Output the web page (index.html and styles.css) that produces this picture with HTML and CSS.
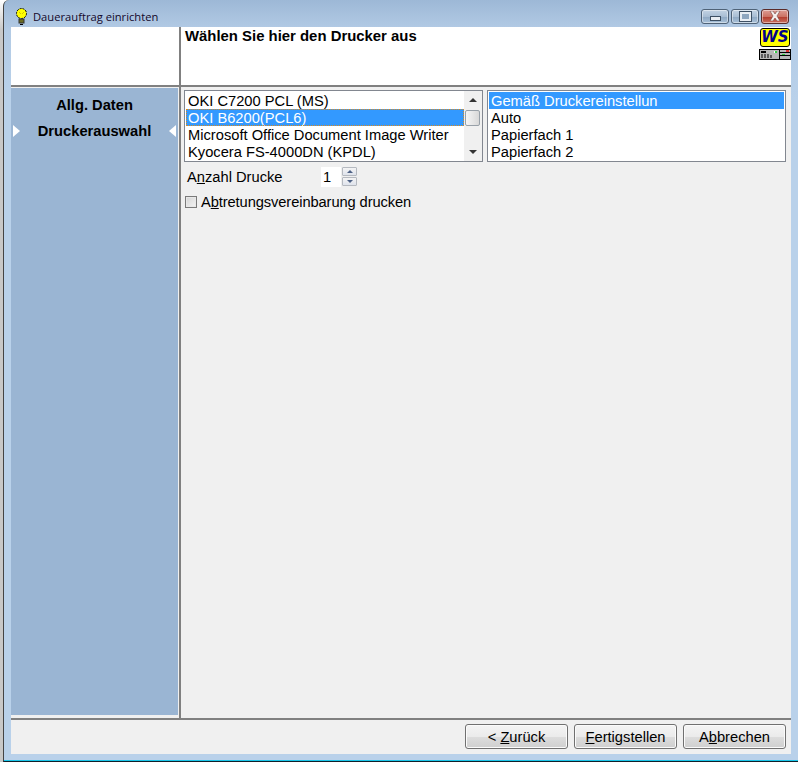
FILE: index.html
```html
<!DOCTYPE html>
<html lang="de">
<head>
    <meta charset="UTF-8">
    <title>Dauerauftrag einrichten</title>
    <link rel="stylesheet" href="styles.css">
</head>
<body>
    <div class="window">
        <!-- Title bar -->
        <div class="titlebar">
            <svg class="title-icon" width="13" height="17" viewBox="0 0 13 17">
                <circle cx="6.5" cy="5.5" r="5" fill="#ffff00" stroke="#000" stroke-width="1" stroke-dasharray="2 1"/>
                <path d="M4 4l2 2M9 4L7 6" stroke="#d8c800" fill="none"/>
                <rect x="4" y="11" width="5" height="4" fill="#6b6b20" stroke="#333" stroke-width="1"/>
                <rect x="5" y="16" width="3" height="1" fill="#000"/>
            </svg>
            <span class="title-text">Dauerauftrag einrichten</span>
            <div class="caption-buttons">
                <div class="caption-btn"><span class="glyph-min"></span></div>
                <div class="caption-btn"><span class="glyph-max"></span></div>
                <div class="caption-btn close">
                    <svg width="14" height="10" viewBox="0 0 14 10">
                        <path d="M2 0h3l2 3 2-3h3L9 5l3 5H9L7 7l-2 3H2l3-5z" fill="#f4f0ee" stroke="#7a4a44" stroke-width="0.6"/>
                    </svg>
                </div>
            </div>
        </div>

        <div class="content">
            <!-- Header -->
            <div class="header">
                <div class="header-left"></div>
                <div class="header-right">
                    <strong class="header-title">Wählen Sie hier den Drucker aus</strong>
                    <div class="logo">
                        <div class="logo-ws">WS</div>
                        <svg class="logo-printer" width="32" height="11" viewBox="0 0 32 11">
                            <rect x="0.5" y="0.5" width="31" height="10" fill="#b8b8b8" stroke="#000"/>
                            <rect x="2" y="2" width="5" height="2" fill="#000"/>
                            <path d="M3 5v4M6 5v4M9 5v4M12 6v3" stroke="#000"/>
                            <rect x="15" y="2" width="2" height="2" fill="#fff"/>
                            <rect x="16" y="2" width="2" height="2" fill="#30d040"/>
                            <rect x="20" y="1" width="1" height="9" fill="#000"/>
                            <path d="M21 3.5h10M21 6.5h10" stroke="#000"/>
                            <rect x="27" y="1" width="3" height="2" fill="#e03030"/>
                            <rect x="23" y="5" width="3" height="1" fill="#30d040"/>
                        </svg>
                    </div>
                </div>
            </div>

            <div class="main">
                <!-- Steps -->
                <div class="sidebar-wrap">
                    <nav class="sidebar">
                        <div class="step"><span class="step-label">Allg. Daten</span></div>
                        <div class="step active">
                            <span class="arrow-right"></span>
                            <span class="step-label">Druckerauswahl</span>
                            <span class="arrow-left"></span>
                        </div>
                    </nav>
                </div>

                <!-- Printer selection -->
                <div class="panel">
                    <div class="lists">
                        <div class="listbox printers">
                            <div class="list-items">
                                <div class="list-item">OKI C7200 PCL (MS)</div>
                                <div class="list-item selected focused">OKI B6200(PCL6)</div>
                                <div class="list-item">Microsoft Office Document Image Writer</div>
                                <div class="list-item">Kyocera FS-4000DN (KPDL)</div>
                            </div>
                            <div class="scrollbar">
                                <span class="scroll-up"></span>
                                <span class="scroll-thumb"></span>
                                <span class="scroll-down"></span>
                            </div>
                        </div>
                        <div class="listbox trays">
                            <div class="list-items">
                                <div class="list-item selected">Gemäß Druckereinstellun</div>
                                <div class="list-item">Auto</div>
                                <div class="list-item">Papierfach 1</div>
                                <div class="list-item">Papierfach 2</div>
                            </div>
                        </div>
                    </div>

                    <div class="copies-row">
                        <span class="copies-label">A<u>n</u>zahl Drucke</span>
                        <span class="copies-value">1</span>
                        <div class="spinner">
                            <span class="spin-btn"><i class="spin-up"></i></span>
                            <span class="spin-btn"><i class="spin-down"></i></span>
                        </div>
                    </div>

                    <div class="check-row">
                        <span class="checkbox"></span>
                        <span>A<u>b</u>tretungsvereinbarung drucken</span>
                    </div>
                </div>
            </div>

            <!-- Buttons -->
            <div class="footer">
                <div class="btn">&lt; <u>Z</u>urück</div>
                <div class="btn"><u>F</u>ertigstellen</div>
                <div class="btn">A<u>b</u>brechen</div>
            </div>
        </div>
    </div>
</body>
</html>
```

FILE: styles.css
```css
:root {
    --line: #808080;
    --face: #f0f0f0;
    --select: #3399ff;
    --frame: #b9d1ea;
}

html, body {
    margin: 0;
    height: 762px;
    overflow: hidden;
}

body {
    background: linear-gradient(180deg, #fff 0, #c8c8c8 30px);
    font-family: "Liberation Sans", Arial, sans-serif;
    font-size: 14.7px;
    color: #000;
}

/* Window frame */
.window {
    box-sizing: border-box;
    height: 762px;
    width: 795px;
    margin-left: 3px;
    padding: 0 7px 7px 7px;
    background: linear-gradient(180deg, #9db8d6 0, #b3cbe5 30px, var(--frame) 100px);
    border-left: 1px solid #444;
    border-bottom: 1px solid #10202a;
    box-shadow: inset 0 -1px 0 #19c6ea;
    border-top-left-radius: 6px;
    display: flex;
    flex-direction: column;
}

.titlebar {
    height: 27px;
    box-sizing: border-box;
    padding-top: 5px;
    flex: none;
    display: flex;
    align-items: center;
    margin-right: -7px;
}

.title-icon {
    margin-left: 4px;
    margin-right: 5px;
}

.title-text {
    font-family: "Open Sans", "Noto Sans", sans-serif;
    font-size: 11.2px;
    color: #14082a;
}

.caption-buttons {
    margin-left: auto;
    margin-right: 9px;
    display: flex;
    gap: 2px;
}

.caption-btn {
    box-sizing: border-box;
    width: 28px;
    height: 15px;
    border: 1px solid #4f6277;
    border-radius: 3px;
    background: linear-gradient(180deg, #c3d3e4 0, #a9bed4 50%, #8da7c2 51%, #a9c1d9 100%);
    box-shadow: inset 0 0 0 1px rgba(255,255,255,0.45);
    display: flex;
    align-items: center;
    justify-content: center;
}

.caption-btn.close {
    border-color: #5a2a28;
    background: linear-gradient(180deg, #dd9d94 0, #cc7365 50%, #b2392b 51%, #c8705f 100%);
}

.glyph-min {
    display: block;
    width: 9px;
    height: 3px;
    margin-top: 4px;
    background: #e8edf3;
    border: 1px solid #3d4f63;
}

.glyph-max {
    display: block;
    box-sizing: border-box;
    width: 11px;
    height: 9px;
    background: #8ea6bf;
    border: 2px solid #e8edf3;
    outline: 1px solid #3d4f63;
}

.content {
    flex: 1;
    display: flex;
    flex-direction: column;
    background: var(--face);
    min-height: 0;
}

/* Header */
.header {
    height: 60px;
    flex: none;
    display: flex;
    background: #fff;
    border-bottom: 2px solid var(--line);
    box-sizing: border-box;
}

.header-left {
    width: 168px;
    flex: none;
    border-right: 2px solid var(--line);
}

.header-right {
    flex: 1;
    display: flex;
    justify-content: space-between;
    padding-left: 4px;
}

.header-title {
    font-size: 14.9px;
    line-height: 16px;
    margin-top: 1px;
}

.logo {
    display: flex;
    flex-direction: column;
    align-items: center;
    width: 32px;
    padding-top: 1px;
}

.logo-ws {
    box-sizing: border-box;
    width: 30px;
    height: 19px;
    background: #ffff00;
    border: 1px solid #000;
    border-radius: 3px;
    color: #00008b;
    font: italic bold 15px/16px "DejaVu Sans", sans-serif;
    text-align: center;
}

.logo-printer {
    margin-top: 2px;
    display: block;
}

/* Main area */
.main {
    flex: 1;
    display: flex;
    border-bottom: 2px solid var(--line);
    min-height: 0;
    background: var(--face);
}

.sidebar-wrap {
    width: 168px;
    flex: none;
    border-right: 2px solid var(--line);
    padding-top: 1px;
    padding-bottom: 3px;
    display: flex;
}

.sidebar {
    flex: 1;
    margin-right: 1px;
    background: #9ab5d3;
    padding-top: 4px;
    font-weight: bold;
    font-size: 14.7px;
}

.step {
    height: 26px;
    display: flex;
    align-items: center;
    justify-content: center;
    position: relative;
}

.arrow-right,
.arrow-left {
    position: absolute;
    top: 7px;
    width: 0;
    height: 0;
    border-top: 6px solid transparent;
    border-bottom: 6px solid transparent;
}

.arrow-right {
    left: 2px;
    border-left: 7px solid #fff;
}

.arrow-left {
    right: 2px;
    border-right: 7px solid #fff;
}

.panel {
    flex: 1;
    padding: 3px 5px 0 3px;
}

.lists {
    display: flex;
    gap: 4px;
}

.listbox {
    box-sizing: border-box;
    width: 299px;
    height: 72px;
    background: #fff;
    border: 1px solid #828790;
    display: flex;
    padding: 1px;
}

.list-items {
    flex: 1;
    min-width: 0;
}

.list-item {
    height: 17px;
    line-height: 19px;
    padding-left: 2px;
    white-space: nowrap;
    box-sizing: border-box;
}

.list-item.selected {
    background: var(--select);
    color: #fff;
}

.list-item.focused {
    outline: 1px dotted #d98a20;
    outline-offset: -1px;
}

/* Scrollbar */
.scrollbar {
    width: 18px;
    flex: none;
    background: #f0f0f0;
    display: flex;
    flex-direction: column;
    align-items: center;
    margin: -1px -1px -1px 0;
    position: relative;
}

.scroll-up,
.scroll-down {
    width: 0;
    height: 0;
    border-left: 4px solid transparent;
    border-right: 4px solid transparent;
}

.scroll-up {
    margin-top: 7px;
    border-bottom: 4px solid #333;
}

.scroll-down {
    margin-top: auto;
    margin-bottom: 7px;
    border-top: 4px solid #333;
}

.scroll-thumb {
    position: absolute;
    top: 19px;
    left: 1px;
    box-sizing: border-box;
    width: 15px;
    height: 16px;
    border: 1px solid #98a0a8;
    border-radius: 2px;
    background: linear-gradient(90deg, #f6f6f6, #d8d8d8);
}

/* Copies row */
.copies-row {
    display: flex;
    align-items: center;
    height: 21px;
    margin-top: 4px;
    padding-left: 3px;
}

.copies-label {
    width: 134px;
}

.copies-value {
    box-sizing: border-box;
    width: 20px;
    height: 20px;
    line-height: 20px;
    padding-left: 2px;
    background: #fff;
}

.spinner {
    display: flex;
    flex-direction: column;
    gap: 1px;
    margin-left: 1px;
}

.spin-btn {
    box-sizing: border-box;
    width: 15px;
    height: 9px;
    border: 1px solid #b5b9c0;
    border-radius: 1px;
    background: linear-gradient(180deg, #f4f4f4, #dfe3ec);
    display: flex;
    align-items: center;
    justify-content: center;
}

.spin-up,
.spin-down {
    width: 0;
    height: 0;
    border-left: 3px solid transparent;
    border-right: 3px solid transparent;
}

.spin-up {
    border-bottom: 3px solid #4d6185;
}

.spin-down {
    border-top: 3px solid #4d6185;
}

/* Checkbox row */
.check-row {
    display: flex;
    align-items: center;
    gap: 4px;
    margin-top: 5px;
    padding-left: 1px;
    height: 20px;
    letter-spacing: -0.1px;
}

.checkbox {
    box-sizing: border-box;
    width: 12px;
    height: 12px;
    border: 1px solid #7a7a7a;
    background: linear-gradient(135deg, #d4d4d4, #f4f4f4);
    box-shadow: inset 0 0 0 1px #e8e8e8;
}

/* Footer buttons */
.footer {
    height: 34px;
    flex: none;
    display: flex;
    justify-content: flex-end;
    align-items: flex-start;
    gap: 6px;
    padding: 4px 5px 0 0;
    box-sizing: border-box;
}

.btn {
    box-sizing: border-box;
    width: 103px;
    height: 25px;
    line-height: 24px;
    text-align: center;
    border: 1px solid #707070;
    border-radius: 3px;
    background: linear-gradient(180deg, #f4f4f4 0, #ebebeb 50%, #dddddd 51%, #cfcfcf 100%);
    box-shadow: inset 0 0 0 1px #fbfbfb;
}
```
